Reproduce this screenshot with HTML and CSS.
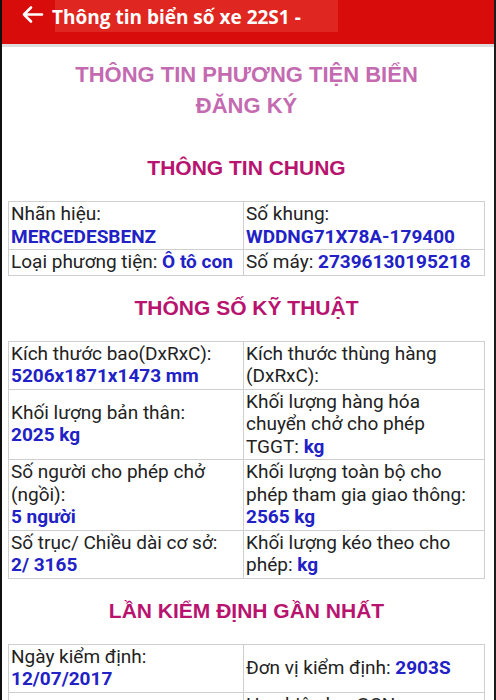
FILE: index.html
```html
<!DOCTYPE html>
<html lang="vi">
<head>
<meta charset="utf-8">
<title>Thông tin biển số xe</title>
<link rel="stylesheet" href="styles.css">
</head>
<body>
<div class="frame">
  <header class="topbar">
    <svg class="back" width="24" height="30" viewBox="0 0 24 30" aria-hidden="true">
      <path d="M3 14.5 H21 M3 14.5 L10 7.5 M3 14.5 L10 21.5" fill="none" stroke="#fff" stroke-width="2.6" stroke-linecap="round" stroke-linejoin="round"/>
    </svg>
    <div class="title">Thông tin biển số xe 22S1 -</div>
  </header>
  <div class="divider"></div>

  <main class="content">
    <h1 class="main-title">THÔNG TIN PHƯƠNG TIỆN BIỂN ĐĂNG KÝ</h1>

    <h2 class="section first">THÔNG TIN CHUNG</h2>
    <table class="info">
      <tr>
        <td class="c1">Nhãn hiệu:<br><b>MERCEDESBENZ</b></td>
        <td>Số khung:<br><b>WDDNG71X78A-179400</b></td>
      </tr>
      <tr>
        <td class="c1">Loại phương tiện: <b>Ô tô con</b></td>
        <td>Số máy: <b>27396130195218</b></td>
      </tr>
    </table>

    <h2 class="section">THÔNG SỐ KỸ THUẬT</h2>
    <table class="info">
      <tr>
        <td class="c1">Kích thước bao(DxRxC):<br><b>5206x1871x1473 mm</b></td>
        <td>Kích thước thùng hàng (DxRxC):</td>
      </tr>
      <tr>
        <td class="c1">Khối lượng bản thân:<br><b>2025 kg</b></td>
        <td>Khối lượng hàng hóa chuyển chở cho phép TGGT: <b>kg</b></td>
      </tr>
      <tr>
        <td class="c1">Số người cho phép chở (ngồi):<br><b>5 người</b></td>
        <td>Khối lượng toàn bộ cho phép tham gia giao thông:<br><b>2565 kg</b></td>
      </tr>
      <tr>
        <td class="c1">Số trục/ Chiều dài cơ sở:<br><b>2/ 3165</b></td>
        <td>Khối lượng kéo theo cho phép: <b>kg</b></td>
      </tr>
    </table>

    <h2 class="section">LẦN KIỂM ĐỊNH GẦN NHẤT</h2>
    <table class="info">
      <tr>
        <td class="c1">Ngày kiểm định:<br><b>12/07/2017</b></td>
        <td>Đơn vị kiểm định: <b>2903S</b></td>
      </tr>
      <tr>
        <td class="c1">Số tem GCN: <b>KC 1234567</b></td>
        <td>Hạn hiệu lực GCN:<br><b>11/07/2019</b></td>
      </tr>
    </table>
  </main>
</div>
</body>
</html>
```

FILE: styles.css
```css
html, body {
  margin: 0;
  padding: 0;
  background: #ffffff;
}

.frame {
  border-left: 2px solid #101010;
  border-right: 2px solid #1c1c1c;
  min-height: 700px;
  background: #ffffff;
}

.topbar {
  height: 44px;
  background: #d90c0c;
  display: flex;
  align-items: flex-start;
}

.back {
  display: block;
  margin-left: 19px;
  flex: none;
}

.title {
  margin-left: 10px;
  width: 283px;
  height: 32px;
  background: #df2620;
  color: #ffffff;
  font-family: "Open Sans", "Noto Sans", sans-serif;
  font-weight: 700;
  font-size: 19px;
  line-height: 32px;
  padding-top: 1px;
  box-sizing: border-box;
  text-indent: -3px;
  white-space: nowrap;
}

.divider {
  height: 3px;
  background: #dedede;
}

.content {
  padding: 0 9px 20px 6px;
}

.main-title {
  margin: 12px auto 0;
  max-width: 380px;
  text-align: center;
  color: #c46ab1;
  font-family: "Liberation Sans", Arial, sans-serif;
  font-weight: 700;
  font-size: 22px;
  line-height: 31px;
}

.section {
  margin: 19px 0 21px;
  text-align: center;
  color: #b8136f;
  font-family: "Liberation Sans", Arial, sans-serif;
  font-weight: 700;
  font-size: 21px;
  line-height: 25px;
}

.section.first {
  margin-top: 34px;
}

.info {
  width: 100%;
  border-collapse: collapse;
  font-family: Roboto, "Noto Sans", sans-serif;
  font-size: 19px;
  line-height: 22.5px;
  color: #222222;
}

.info td {
  border: 1px solid #cfcfcf;
  padding: 1px 6px 1px 2px;
  vertical-align: middle;
}

.info td.c1 {
  width: 231px;
  padding-right: 1px;
}

.info b {
  color: #2121c6;
  font-weight: 700;
}
```
